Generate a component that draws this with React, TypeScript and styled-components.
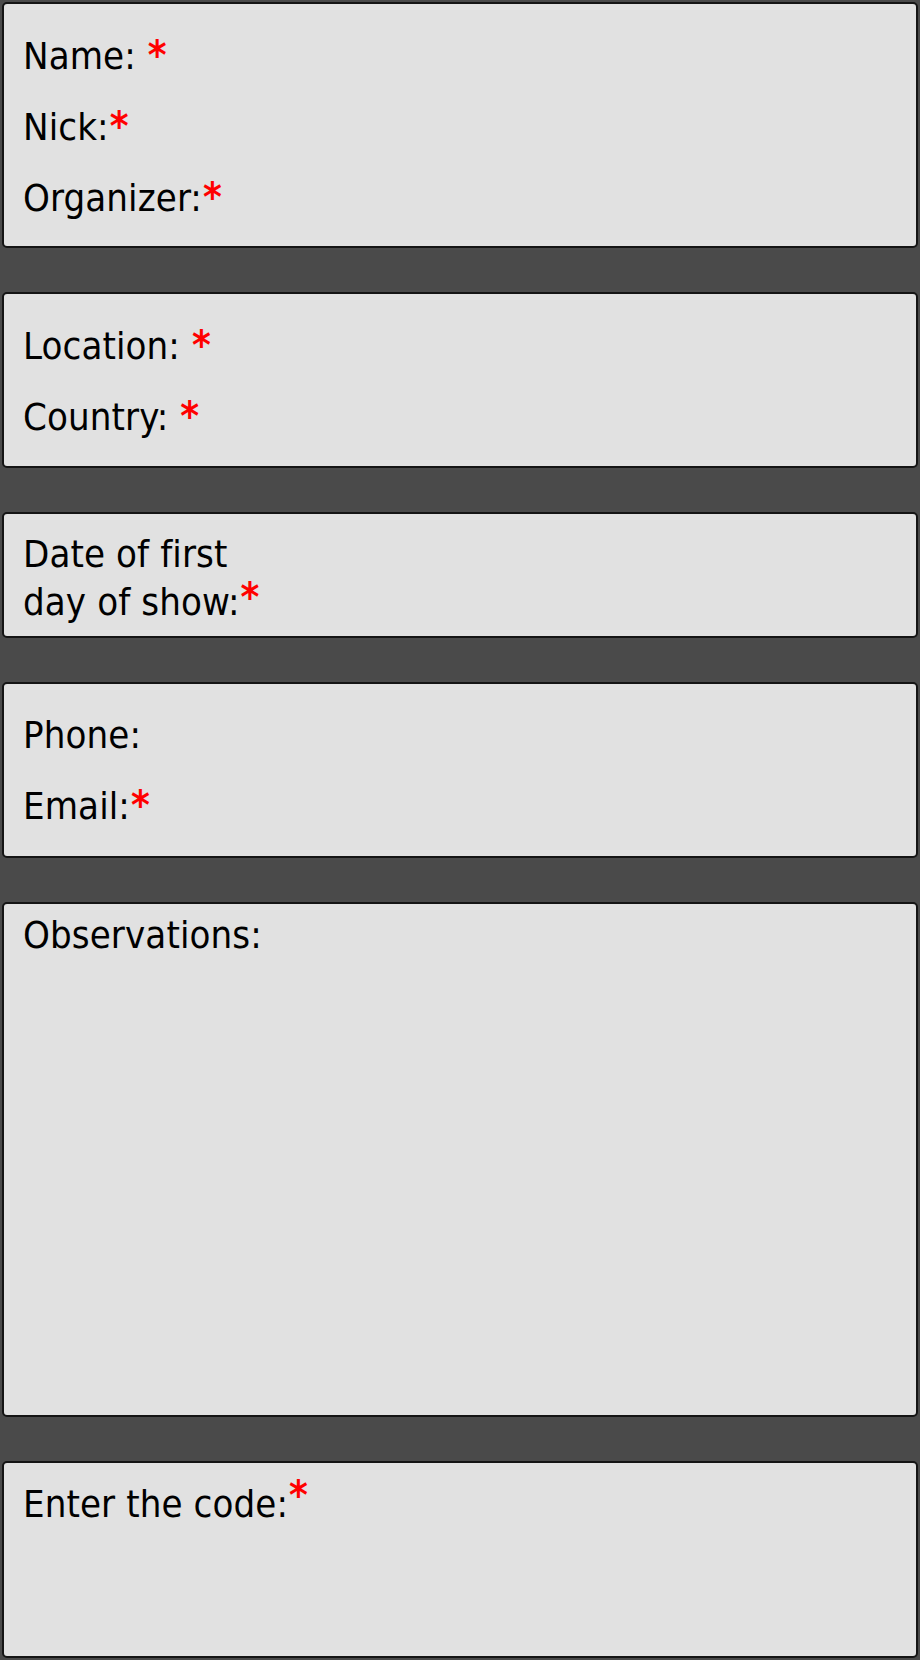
import React from 'react'
import styled, { createGlobalStyle } from 'styled-components'

const GlobalStyle = createGlobalStyle`
  html, body {
    margin: 0;
    padding: 0;
    background: #4a4a4a;
  }
  body {
    font-family: "DejaVu Sans Condensed", "DejaVu Sans", sans-serif;
    font-stretch: condensed;
  }
`

const Page = styled.div`
  display: flex;
  flex-direction: column;
  gap: 44px;
  padding: 2px 2px 0 2px;
  width: 920px;
  box-sizing: border-box;
`

const Box = styled.div<{ $pad?: string; $height?: number }>`
  background: #e1e1e1;
  border: 2px solid #141414;
  border-radius: 5px;
  box-sizing: border-box;
  padding: ${(p) => p.$pad || '16px 19px'};
  height: ${(p) => (p.$height ? `${p.$height}px` : 'auto')};
  display: flex;
  flex-direction: column;
`

const Row = styled.div<{ $lh?: number }>`
  font-size: 38px;
  line-height: ${(p) => p.$lh || 70}px;
  color: #000;
  letter-spacing: 0.1px;
  white-space: nowrap;
`

const Star = styled.span<{ $raise?: number }>`
  color: #ff0000;
  font-weight: bold;
  font-size: 40px;
  position: relative;
  top: ${(p) => -(p.$raise || 0)}px;
  margin-left: 1px;
`

export default function App() {
  return (
    <>
      <GlobalStyle />
      <Page>
        <Box $height={246}>
          <Row>Name: <Star>*</Star></Row>
          <Row>Nick:<Star>*</Star></Row>
          <Row>Organizer:<Star>*</Star></Row>
        </Box>
        <Box $height={176}>
          <Row>Location: <Star>*</Star></Row>
          <Row>Country: <Star>*</Star></Row>
        </Box>
        <Box $height={126} $pad="17px 19px 11px">
          <Row $lh={47}>Date of first</Row>
          <Row $lh={47}>day of show:<Star $raise={4}>*</Star></Row>
        </Box>
        <Box $height={176}>
          <Row>Phone:</Row>
          <Row>Email:<Star>*</Star></Row>
        </Box>
        <Box $height={515} $pad="8px 19px">
          <Row $lh={47}>Observations:</Row>
        </Box>
        <Box $height={197} $pad="17px 19px">
          <Row $lh={47}>Enter the code:<Star $raise={8}>*</Star></Row>
        </Box>
      </Page>
    </>
  )
}
